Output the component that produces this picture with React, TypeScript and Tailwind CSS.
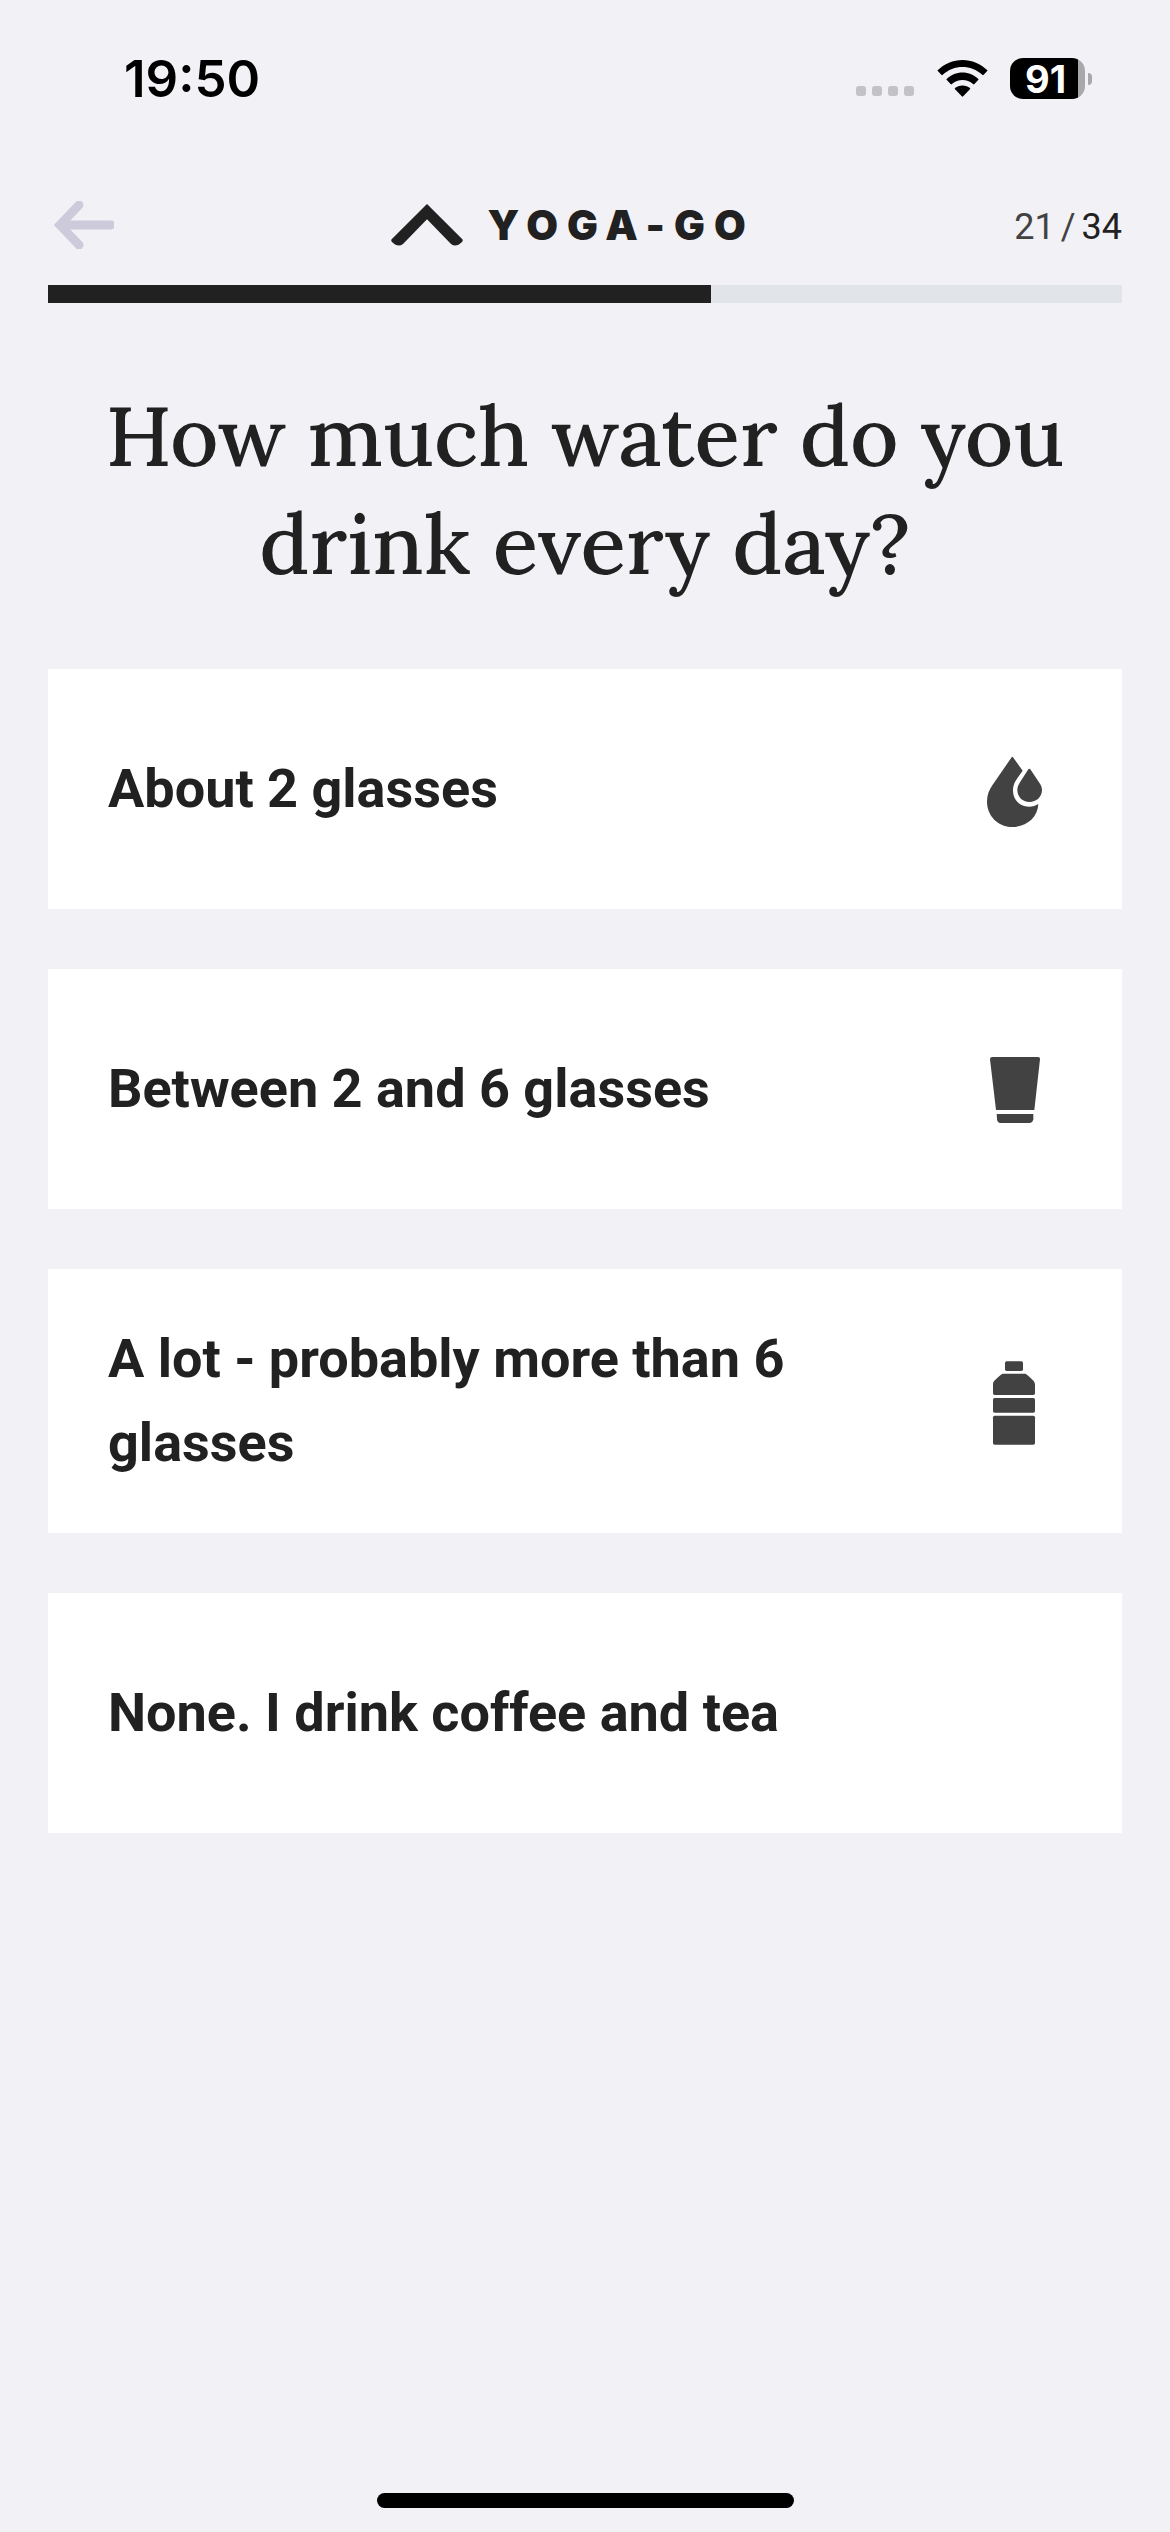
import type { ReactNode } from "react";

const DropIcon = () => (
  <svg viewBox="18 33 288 288" className="size-24 shrink-0" fill="#424242" aria-hidden="true">
    <path d="M154 83Q157 78 160 83L188 122C170 148 159 158 159 182C159 212 183 230 207 230C218 230 228 227 235 222C233 262 200 291 157 291C114 291 81 257 81 215C81 196 87 180 97 166Z" />
    <path d="M205 118Q208 114 211 118L238 158C243 165 246 172 246 180C246 201 229 216 208 216C188 216 172 201 172 180C172 172 175 165 180 157Z" />
  </svg>
);

const GlassIcon = () => (
  <svg viewBox="18 33 288 288" className="size-24 shrink-0" fill="#424242" aria-hidden="true">
    <path d="M97 81H234Q241 81 240 88L223 240H108L90 88Q90 81 97 81Z" />
    <path d="M110 252H220V268Q218 279 208 279H122Q112 279 111 268Z" />
  </svg>
);

const BottleIcon = () => (
  <svg viewBox="18 39 288 288" className="size-24 shrink-0" fill="#424242" aria-hidden="true">
    <rect x="135" y="64" width="54" height="29" rx="5" />
    <path d="M128 101H196Q202 103 221 123Q225 128 225 135V160Q225 165 220 165H104Q99 165 99 160V132Q99 126 103 122Q121 104 128 101Z" />
    <rect x="99" y="174" width="126" height="44" rx="5" />
    <rect x="99" y="227" width="126" height="87" rx="5" />
  </svg>
);

const WifiIcon = () => (
  <svg viewBox="318 84 154 118" className="h-[39px] w-[51px]" aria-label="Wi-Fi" role="img">
    <path d="M319 119C360 76 430 76 471 119L459 132Q457 134 455 132C421 100 369 100 335 132Q333 134 331 132Z" />
    <path d="M346 146C372 118 418 118 444 146L431 160Q429 162 427 160C409 143 381 143 363 160Q361 162 359 160Z" />
    <path d="M371 174C384 161 406 161 419 174L397 197Q395 199 393 197Z" />
  </svg>
);

const options: { label: string; icon?: ReactNode }[] = [
  { label: "About 2 glasses", icon: <DropIcon /> },
  { label: "Between 2 and 6 glasses", icon: <GlassIcon /> },
  { label: "A lot - probably more than 6 glasses", icon: <BottleIcon /> },
  { label: "None. I drink coffee and tea" },
];

const step = 21;
const total = 34;

function StatusBar() {
  return (
    <div className="flex h-[165px] items-center justify-between pr-[78px] pb-2 pl-[124px] font-['Inter',sans-serif] text-black">
      <time className="text-[51px] leading-none font-semibold">19:50</time>
      <div className="flex items-center">
        <div className="mt-6 mr-[70px] flex w-[11px] gap-1.5">
          {[0, 1, 2, 3].map((dot) => (
            <span key={dot} className="size-2.5 shrink-0 rounded-[3px] bg-[#c3c2c7]" />
          ))}
        </div>
        <WifiIcon />
        <div className="ml-[22px] flex h-[41px] w-[75px] items-center justify-center rounded-[13px] bg-linear-to-r from-black from-91% to-[#a8a8ab] to-91% pr-1 text-[38px] leading-none font-bold text-white">
          91
        </div>
        <span className="ml-[3px] h-3 w-1 rounded-r-full bg-[#a8a8ab]" />
      </div>
    </div>
  );
}

function Header() {
  return (
    <header className="px-12">
      <div className="flex h-[120px] items-center justify-between">
        <button type="button" aria-label="Back" className="flex w-[84px] pl-1.5">
          <svg viewBox="0 0 60 48" className="h-12 w-[60px]" fill="none" stroke="#cdcadc" strokeWidth="9" aria-hidden="true">
            <path d="M10 24H57" strokeLinecap="round" />
            <path d="M25 4L6 24L25 44" strokeLinecap="round" strokeLinejoin="miter" />
          </svg>
        </button>
        <div className="flex items-center gap-6">
          <svg viewBox="63 72 216 126" className="h-[42px] w-[72px]" fill="#212121" aria-hidden="true">
            <path d="M171 72L277 178Q280 182 276 186Q258 204 243 192L171 118L99 192Q84 204 66 186Q62 182 65 178Z" />
          </svg>
          <span className="font-['Inter',sans-serif] text-[41px] leading-none font-black tracking-[9px] text-[#212121]">
            YOGA-GO
          </span>
        </div>
        <p className="flex gap-1.5 pt-1 font-['Roboto',sans-serif] text-[36px] leading-none text-[#424242]">
          <span>{step}</span>
          <span>/</span>
          <span className="text-[#212121]">{total}</span>
        </p>
      </div>
      <div
        role="progressbar"
        aria-label="Quiz progress"
        aria-valuenow={step}
        aria-valuemin={0}
        aria-valuemax={total}
        className="h-[18px] bg-[#e1e4e8]"
      >
        <div className="h-full bg-[#212121]" style={{ width: `${(step / total) * 100}%` }} />
      </div>
    </header>
  );
}

export default function App() {
  return (
    <div className="flex min-h-screen flex-col bg-[#f2f1f6]">
      <StatusBar />
      <Header />
      <main className="px-12">
        <h1 className="mt-[78px] text-center font-['Lora','Liberation_Serif',serif] text-[84px] leading-[108px] font-medium text-[#212121]">
          How much water do you drink every day?
        </h1>
        <div className="mt-[72px] flex flex-col gap-[60px]">
          {options.map(({ label, icon }) => (
            <button
              key={label}
              type="button"
              className="flex min-h-[240px] items-center justify-between gap-6 bg-white px-[60px] py-12 text-left font-['Roboto',sans-serif] text-[54px] leading-[84px] font-bold text-[#212121]"
            >
              <span>{label}</span>
              {icon}
            </button>
          ))}
        </div>
      </main>
      <div className="mt-auto mb-6 h-[15px] w-[417px] self-center rounded-full bg-black" />
    </div>
  );
}
